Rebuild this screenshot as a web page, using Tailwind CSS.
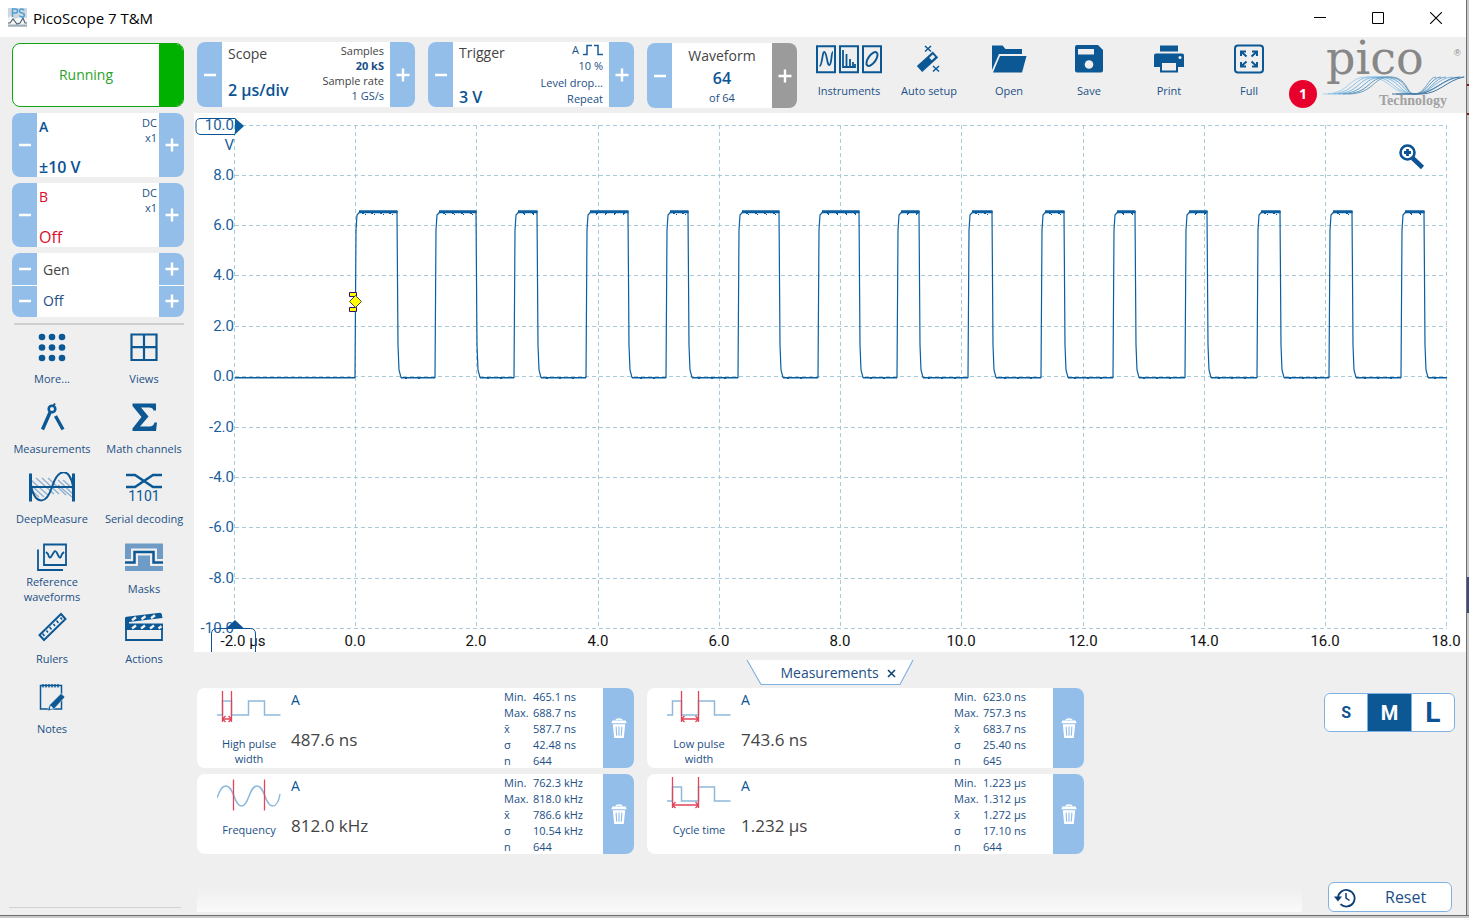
<!DOCTYPE html>
<html lang="en">
<head>
<meta charset="utf-8">
<title>PicoScope 7 T&amp;M</title>
<script src="https://cdn.jsdelivr.net/npm/@tailwindcss/browser@4"></script>
</head>
<body class="flex min-h-screen flex-col bg-[#efefef] font-['Open_Sans','Noto_Sans',sans-serif] text-[#1b4f86]">
<svg class="hidden">
  <symbol id="minus" viewBox="0 0 14 14"><path d="M1 7h12" stroke="#fff" stroke-width="2.4"/></symbol>
  <symbol id="plus" viewBox="0 0 14 14"><path d="M.5 7h13M7 .5v13" stroke="#fff" stroke-width="2.4"/></symbol>
  <symbol id="trash" viewBox="0 0 16 22"><path d="M5 2.500Q5 1 8 1t3 1.500" fill="none" stroke="#fff" stroke-width="1.500"/><path d="M1 2.500h14l1 3H0z" fill="#fff"/><path d="M1.500 6.500h13L13 21H3z" fill="#fff"/><path d="M5 9l.6 9.500M8 9v9.500M11 9l-.6 9.500" stroke="#93bee9" stroke-width="1.200"/></symbol>
</svg>

<div class="flex flex-1">
<div class="flex min-w-0 flex-1 flex-col">
<header class="flex h-[37px] items-center bg-white pb-[2px] pl-2 text-black">
  <svg class="h-[19px] w-[19px]" viewBox="0 0 19 19"><path d="M0 0h19v19H0z" fill="#cfd8df"/><path d="M0 10l3-2 4 3 5-2 7 1v7H0z" fill="#f4f7f9"/><path d="M0 17.500h19" stroke="#9fb0bd" stroke-width="2"/><path d="M0 15h2l3-4 4 5 3-1 3-5 2 5h2" fill="none" stroke="#51606d" stroke-width="1.100"/><path d="M4.500 9V1h3q2 0 2 2t-2 2h-3M16 2.500Q15.500 1 14 1q-2.500 0-2.500 1.800T14 5t2.300 2.200Q16.300 9 14 9q-2 0-2.600-1.600" fill="none" stroke="#4f9ed4" stroke-width="1.500"/></svg>
  <h1 class="ml-[6px] text-[15px] leading-5 font-normal">PicoScope 7 T&amp;M</h1>
  <div class="ml-auto flex pr-px">
    <button aria-label="Minimize" class="flex h-9 w-[58px] items-center justify-center"><svg class="h-3 w-3" viewBox="0 0 12 12"><path d="M0 5.500h12" stroke="#000"/></svg></button>
    <button aria-label="Maximize" class="flex h-9 w-[58px] items-center justify-center"><svg class="h-3 w-3" viewBox="0 0 12 12"><path d="M.5.5h11v11H.5z" fill="none" stroke="#000"/></svg></button>
    <button aria-label="Close" class="flex h-9 w-[58px] items-center justify-center"><svg class="h-3 w-3" viewBox="0 0 12 12"><path d="M0 0l12 12M12 0L0 12" stroke="#000" stroke-width="1.100"/></svg></button>
  </div>
</header>

<div class="flex flex-1">
<aside class="flex w-[194px] shrink-0 flex-col pt-[6px]">
  <div class="ml-3 flex w-[172px] flex-col gap-[6px]">
    <button class="flex h-16 overflow-hidden rounded-lg border border-[#12a512] bg-white text-sm text-[#2aa32a]">
      <span class="flex h-full flex-1 items-center justify-center">Running</span><span class="h-full w-6 bg-[#00b100]"></span>
    </button>
    <section class="flex h-16 overflow-hidden rounded-lg bg-white">
      <button aria-label="A range down" class="flex w-[25px] items-center justify-center bg-[#93bee9]"><svg class="h-[14px] w-[14px]"><use href="#minus"/></svg></button>
      <div class="flex flex-1 flex-col justify-between px-[2px] pt-[2px]">
        <div class="flex justify-between"><span class="pt-[2px] text-sm leading-5 font-semibold text-[#0b5394]">A</span><span class="text-right text-[11px] leading-[15px]">DC<br>x1</span></div>
        <div class="text-base leading-5 font-semibold text-[#0b5394]">±10 V</div>
      </div>
      <button aria-label="A range up" class="flex w-[25px] items-center justify-center bg-[#93bee9]"><svg class="h-[14px] w-[14px]"><use href="#plus"/></svg></button>
    </section>
    <section class="flex h-16 overflow-hidden rounded-lg bg-white">
      <button aria-label="B range down" class="flex w-[25px] items-center justify-center bg-[#93bee9]"><svg class="h-[14px] w-[14px]"><use href="#minus"/></svg></button>
      <div class="flex flex-1 flex-col justify-between px-[2px] pt-[2px]">
        <div class="flex justify-between"><span class="pt-[2px] text-sm leading-5 font-medium text-[#dc0a2d]">B</span><span class="text-right text-[11px] leading-[15px]">DC<br>x1</span></div>
        <div class="text-base leading-5 font-medium text-[#dc0a2d]">Off</div>
      </div>
      <button aria-label="B range up" class="flex w-[25px] items-center justify-center bg-[#93bee9]"><svg class="h-[14px] w-[14px]"><use href="#plus"/></svg></button>
    </section>
    <section class="flex h-16 overflow-hidden rounded-lg bg-white text-sm">
      <div class="flex w-[25px] flex-col gap-px">
        <button aria-label="Generator previous" class="flex flex-1 items-center justify-center bg-[#93bee9]"><svg class="h-[14px] w-[14px]"><use href="#minus"/></svg></button>
        <button aria-label="Generator down" class="flex flex-1 items-center justify-center bg-[#93bee9]"><svg class="h-[14px] w-[14px]"><use href="#minus"/></svg></button>
      </div>
      <div class="flex flex-1 flex-col justify-around pt-px pl-[6px]"><span class="text-[#444]">Gen</span><span>Off</span></div>
      <div class="flex w-[25px] flex-col gap-px">
        <button aria-label="Generator next" class="flex flex-1 items-center justify-center bg-[#93bee9]"><svg class="h-[14px] w-[14px]"><use href="#plus"/></svg></button>
        <button aria-label="Generator up" class="flex flex-1 items-center justify-center bg-[#93bee9]"><svg class="h-[14px] w-[14px]"><use href="#plus"/></svg></button>
      </div>
    </section>
    <div class="ml-[2px] h-[2px] bg-[#cfcfcf]"></div>
  </div>

  <nav class="mt-[7px] ml-[6px] grid w-[184px] auto-rows-[70px] grid-cols-2 text-center text-[11px] leading-[15px]">
    <button class="flex flex-col items-center"><svg class="h-8 w-12" viewBox="0 0 48 32" fill="#0b5895"><circle cx="14" cy="5" r="3.300"/><circle cx="24" cy="5" r="3.300"/><circle cx="34" cy="5" r="3.300"/><circle cx="14" cy="15.500" r="3.300"/><circle cx="24" cy="15.500" r="3.300"/><circle cx="34" cy="15.500" r="3.300"/><circle cx="14" cy="26" r="3.300"/><circle cx="24" cy="26" r="3.300"/><circle cx="34" cy="26" r="3.300"/></svg><span class="mt-[7px]">More...</span></button>
    <button class="flex flex-col items-center"><svg class="h-8 w-12" viewBox="0 0 48 32" fill="none" stroke="#0b5895" stroke-width="2.200"><path d="M11.500 2.500h25v25.500h-25zM24 2.500V28M11.500 15.200h25"/></svg><span class="mt-[7px]">Views</span></button>
    <button class="flex flex-col items-center"><svg class="h-8 w-12" viewBox="0 0 48 32" fill="none" stroke="#0b5895"><circle cx="24" cy="7" r="3.300" stroke-width="2.600"/><path d="M25.500 3.500L27 1.500" stroke-width="2"/><path d="M22 10.500L14.500 27.500M27.500 14L35 27.500" stroke-width="3.400"/></svg><span class="mt-[7px]">Measurements</span></button>
    <button class="flex flex-col items-center"><svg class="h-8 w-12" viewBox="0 0 48 32"><path d="M12.500 1.500H36v7h-2.500Q33 5.500 29 5.500H21l7.500 9L20 24.500h9.500q4 0 5-4H37L36 29H12.500v-2.500l9-11.500-9-11z" fill="#0b5895"/></svg><span class="mt-[7px]">Math channels</span></button>
    <button class="flex flex-col items-center"><svg class="h-8 w-12" viewBox="0 0 48 32" fill="none"><path d="M3 8l18 16M3 13l13 12M8 6l18 16M14 6l17 16M20 6l18 17M30 8l15 14M35 8l10 9M30 13l14 12M3 18l8 7" stroke="#8fb0cf" stroke-width="1.400"/><path d="M2.500 1.500v28M45.500 1.500v28" stroke="#0b5895" stroke-width="3"/><path d="M3 15h42" stroke="#0b5895" stroke-width="1.800"/><path d="M3 14C7 32 18 34 24 15S41-5 45 14" stroke="#0b5895" stroke-width="2"/></svg><span class="mt-[7px]">DeepMeasure</span></button>
    <button class="flex flex-col items-center"><svg class="h-8 w-12 overflow-visible" viewBox="0 0 48 32"><path d="M6 3h9l18 12h9M6 15h9L33 3h9" fill="none" stroke="#0b5895" stroke-width="2.500"/><text x="24" y="29" text-anchor="middle" font-family="Roboto" font-size="14" fill="#0b5895">1101</text></svg><span class="mt-[7px]">Serial decoding</span></button>
    <button class="flex flex-col items-center"><svg class="h-8 w-12" viewBox="0 0 48 32" fill="none" stroke="#0b5895"><path d="M16 2.500h22v20.500H16z" stroke-width="1.800"/><path d="M10 7.500V28h25" stroke-width="1.800"/><path d="M18 10l2 2q1.500 6 3.500 2l2.500-4q1.500-2 3 1l2 4q1.500 2 3-3l2-2" stroke-width="1.800"/></svg><span>Reference<br>waveforms</span></button>
    <button class="flex flex-col items-center"><svg class="h-8 w-12" viewBox="0 0 48 32" fill="none"><path d="M5 1.500h38V29H5z" fill="#6e9cc6"/><path d="M5 20.500h9.500V10h19v10.500H43" stroke="#efefef" stroke-width="7"/><path d="M5 20.500h9.500V10h19v10.500H43" stroke="#0b5895" stroke-width="2.500"/></svg><span class="mt-[7px]">Masks</span></button>
    <button class="flex flex-col items-center"><svg class="h-8 w-12" viewBox="0 0 48 32" fill="none" stroke="#0b5895"><path d="M33 2l4.500 5L16 28l-4.500-5z" stroke-width="2"/><path d="M16.500 24l-2-2.500M20 20.500l-1.500-2M23.500 17.500l-2-2.500M27 14l-1.500-2M30.500 11l-2-2.500M34 7.500l-1.500-2" stroke-width="1.500"/></svg><span class="mt-[7px]">Rulers</span></button>
    <button class="flex flex-col items-center"><svg class="h-8 w-12" viewBox="0 0 48 32" fill="none"><path d="M6 12.500h36V28H6z" fill="#efefef" stroke="#0b5895" stroke-width="1.800"/><path d="M5 12h38v6H5zM5 11V6Q5 5 6.500 4.800L40 .8q1.500 0 1.800 1.500L42.500 6 9 10v2H5z" fill="#0b5895"/><path d="M12 8.300l4-3M21.500 7.300l4-3M31 6.300l4-3M12 16.500l4-3M21 16.500l4-3M30 16.500l4-3M38.500 16.500l3-2.300" stroke="#efefef" stroke-width="2.400"/></svg><span class="mt-[7px]">Actions</span></button>
    <button class="flex flex-col items-center"><svg class="h-8 w-12" viewBox="0 0 48 32" fill="none"><path d="M12.500 3.500h21V27h-21z" stroke="#0b5895" stroke-width="1.500"/><path d="M15 2v3.500M18 2v3.500M21 2v3.500M24 2v3.500M27 2v3.500M30 2v3.500" stroke="#0b5895" stroke-width="1.400"/><path d="M33 11.500l4 3.500-11 12-6.500 2 2-6z" fill="#0b5895" stroke="#efefef" stroke-width=".6"/><path d="M22.500 23.500l3 2.800-3.500.9z" fill="#fff"/></svg><span class="mt-[7px]">Notes</span></button>
  </nav>
  <div class="mt-auto mb-[7px] ml-[9px] h-px w-[172px] bg-[#d2d2d2]"></div>
</aside>

<main class="flex min-w-0 flex-1 flex-col">
  <div class="flex h-[76px] shrink-0 items-start pt-[5px] pl-[3px]">
    <section class="flex h-[65px] w-[218px] overflow-hidden rounded-lg bg-white">
      <button aria-label="Timebase down" class="flex w-[25px] items-center justify-center bg-[#93bee9]"><svg class="h-[14px] w-[14px]"><use href="#minus"/></svg></button>
      <div class="flex flex-1 justify-between px-[6px] pt-px">
        <div class="flex flex-col justify-between"><span class="pt-px text-sm text-[#444]">Scope</span><span class="pb-[7px] text-base leading-5 font-semibold text-[#0b5394]">2 µs/div</span></div>
        <div class="text-right text-[11px] leading-[15px]"><div class="text-[#444]">Samples</div><div class="font-bold">20 kS</div><div class="text-[#444]">Sample rate</div><div>1 GS/s</div></div>
      </div>
      <button aria-label="Timebase up" class="flex w-[25px] items-center justify-center bg-[#93bee9]"><svg class="h-[14px] w-[14px]"><use href="#plus"/></svg></button>
    </section>
    <section class="ml-[13px] flex h-[65px] w-[206px] overflow-hidden rounded-lg bg-white">
      <button aria-label="Trigger level down" class="flex w-[25px] items-center justify-center bg-[#93bee9]"><svg class="h-[14px] w-[14px]"><use href="#minus"/></svg></button>
      <div class="flex flex-1 justify-between px-[6px]">
        <div class="flex flex-col justify-between"><span class="pt-px text-sm text-[#444]">Trigger</span><span class="text-base leading-5 font-semibold text-[#0b5394]">3 V</span></div>
        <div class="flex flex-col items-end text-[11px] leading-4"><div class="flex items-center gap-1">A<svg class="h-3 w-5" viewBox="0 0 20 12" fill="none" stroke="#1b5c98" stroke-width="1.500"><path d="M0 10.500h4V1.500h5M11 1.500h4v9h5"/></svg></div><div>10 %</div><div class="pt-px">Level drop...</div><div>Repeat</div></div>
      </div>
      <button aria-label="Trigger level up" class="flex w-[25px] items-center justify-center bg-[#93bee9]"><svg class="h-[14px] w-[14px]"><use href="#plus"/></svg></button>
    </section>
    <section class="mt-px ml-[13px] flex h-[65px] w-[150px] overflow-hidden rounded-lg bg-white">
      <button aria-label="Previous waveform" class="flex w-[25px] items-center justify-center bg-[#93bee9]"><svg class="h-[14px] w-[14px]"><use href="#minus"/></svg></button>
      <div class="flex flex-1 flex-col items-center pt-[3px]"><span class="text-sm text-[#444]">Waveform</span><span class="text-base leading-6 font-semibold text-[#0b5394]">64</span><span class="text-[11px] leading-4">of 64</span></div>
      <button aria-label="Next waveform" class="flex w-[25px] items-center justify-center bg-[#9b9b9b]"><svg class="h-[14px] w-[14px]"><use href="#plus"/></svg></button>
    </section>
    <nav class="ml-3 flex text-[11px] leading-4">
      <button class="flex w-20 flex-col items-center gap-[7px]"><svg class="h-[34px] w-[66px]" viewBox="0 0 66 34" fill="none" stroke="#0b5895"><path d="M1 4.200h18v26H1zM24 4.200h18v26H24zM47 4.200h18v26H47z" stroke-width="2"/><path d="M3.500 24C6.500 24 6 9 8.500 10S11 24 13.500 23 15 10 17 10" stroke-width="1.800"/><path d="M27 8v17h12V22M30.500 25V12M34 25v-8M37 25v-5" stroke-width="1.800"/><ellipse cx="56" cy="17" rx="3.800" ry="8" transform="rotate(35 56 17)" stroke-width="2"/></svg>Instruments</button>
      <button class="flex w-20 flex-col items-center gap-[7px]"><svg class="h-[34px] w-10" viewBox="0 0 40 34" fill="none"><path d="M10.500 27L26.500 12.500" stroke="#0b5895" stroke-width="8"/><path d="M21.500 17l3.500-3.200" stroke="#efefef" stroke-width="3.500"/><path d="M16 4l6 5.500M22 4l-6 5.500M24 24l6 5.500M30 24l-6 5.500" stroke="#0b5895" stroke-width="1.500"/></svg>Auto setup</button>
      <button class="flex w-20 flex-col items-center gap-[7px]"><svg class="h-[34px] w-9" viewBox="0 0 36 34" fill="#0b5895"><path d="M1 28V3.500h10.500L14.500 7H31v5H8z"/><path d="M9 14h26.500l-4.500 16.500H2z"/></svg>Open</button>
      <button class="flex w-20 flex-col items-center gap-[7px]"><svg class="h-[34px] w-9" viewBox="0 0 36 34"><path d="M4 5q0-2 2-2h21l5 5v20.500q0 2-2 2H6q-2 0-2-2z" fill="#0b5895"/><path d="M7 7h16v5.500H7z" fill="#efefef"/><circle cx="18" cy="22.500" r="4.300" fill="#efefef"/></svg>Save</button>
      <button class="flex w-20 flex-col items-center gap-[7px]"><svg class="h-[34px] w-9" viewBox="0 0 36 34"><path d="M9 3.500h18v6H9zM5 11.500h26q2 0 2 2v11.500h-7v-5H10v5H3V13.500q0-2 2-2z" fill="#0b5895"/><path d="M10 20h16v9.500H10z" fill="#efefef" stroke="#0b5895" stroke-width="2"/><circle cx="29" cy="15.500" r="1.500" fill="#efefef"/></svg>Print</button>
      <button class="flex w-20 flex-col items-center gap-[7px]"><svg class="h-[34px] w-9" viewBox="0 0 36 34" fill="none" stroke="#0b5895"><rect x="4" y="3.500" width="28" height="27" rx="3" stroke-width="2"/><path d="M10 14V9.500h5M21 9.500h5V14M10 20v4.500h5M21 24.500h5V20M10.500 10l5 4.500M25.500 10l-5 4.500M10.500 24l5-4.500M25.500 24l-5-4.500" stroke-width="2"/></svg>Full</button>
    </nav>
    <div class="mt-[38px] flex h-7 w-7 shrink-0 items-center justify-center rounded-full bg-[#e8002d] text-sm font-bold text-white">1</div>
    <svg class="ml-auto h-[68px] w-[146px] shrink-0 overflow-visible" viewBox="0 0 146 68" role="img" aria-label="pico Technology">
      <g fill="none" stroke-width="1">
        <path d="M3 52c28 0 24-17 44-17 24 0 24 17 44 17 26 0 30-17 54-17" stroke="#a6cfec"/>
        <path d="M8 52c28 0 24-17 44-17 24 0 20 17 44 17 20 0 26-17 48-17" stroke="#8ec3e8"/>
        <path d="M13 52c28 0 24-17 44-17 24 0 20 17 38 17 16 0 22-17 38-17" stroke="#7fb9e2"/>
        <path d="M18 52c28 0 24-17 44-17 22 0 20 17 34 17 14 0 18-17 30-17" stroke="#6aa9d6"/>
        <path d="M23 52c28 0 24-17 44-17 20 0 18 17 28 17 12 0 16-17 26-17" stroke="#5b96c1"/>
        <path d="M28 52c26 0 24-17 42-17 18 0 16 17 24 17 12 0 14-17 22-17" stroke="#6f9fc2"/>
        <path d="M72 52h24c18 0 28-17 44-17M76 52h25c18 0 26-14 43-17" stroke="#46779f"/>
      </g>
      <text x="6" y="32" font-family="DejaVu Serif" font-size="46" fill="#878787">pico</text>
      <text x="134" y="14" font-family="Liberation Sans" font-size="9" fill="#878787">®</text>
      <text x="59" y="63" font-family="Liberation Serif" font-size="14" font-weight="bold" fill="#a2a2a2">Technology</text>
    </svg>
  </div>

  <section class="relative bg-white" aria-label="Scope view">
    <svg id="scope" class="block h-auto w-full" viewBox="194 113 1272 539" fill="none">
      <g id="grid" stroke="#a9cbd9" stroke-dasharray="4 3"></g>
      <g id="volts" font-family="Roboto" font-size="15" fill="#1a5f9c" text-anchor="end"></g>
      <g id="times" font-family="Roboto" font-size="15" fill="#111" text-anchor="middle"></g>
      <path id="trace" stroke="#0b5fa0" stroke-width="1.200"/>
      <path id="flats" stroke="#0b5fa0" stroke-width="3"/>
      <path id="noise" stroke="#0b5fa0"/>
      <path d="M235 118.500h-34q-5 0-5 4v7q0 5 5 5h34" stroke="#0b5394"/>
      <path d="M235 118l9 8-9 8.500z" fill="#0b5fa0"/>
      <path d="M211.500 652v-18q0-5.500 5-5.500h34q5 0 5 5.500v18" stroke="#0b5394"/>
      <path d="M226 628.500l9-8.500 9 8.500z" fill="#0b5394"/>
      <path d="M349.500 292.500h7v4h-7zM349.500 307.500h7v4h-7z" fill="#ff0" stroke="#30106b"/>
      <path d="M355.500 295.500l6 6-6 6-6-6z" fill="#ff0" stroke="#444"/>
    </svg>
    <button aria-label="Zoom" class="absolute top-[30px] right-[41px]"><svg class="h-[27px] w-[27px]" viewBox="0 0 27 27" fill="none" stroke="#0b5394"><circle cx="9.500" cy="9.500" r="7" stroke-width="2.600"/><path d="M9.500 6v7M6 9.500h7" stroke-width="2.800"/><path d="M14.500 15l10 9.500" stroke-width="4.500"/></svg></button>
  </section>

  <section class="flex flex-1 flex-col">
    <div class="flex h-9 items-center justify-center pt-[6px]">
      <div class="relative flex h-[26px] w-[168px] items-center justify-center gap-2">
        <svg class="absolute inset-0 h-full w-full" viewBox="0 0 168 26"><path d="M1 0l14 24.500h139L167 0" fill="#fff" stroke="#7fb2e2" stroke-width="1.200"/></svg>
        <span class="relative ml-4 text-sm">Measurements</span>
        <button aria-label="Close measurements" class="relative"><svg class="h-[9px] w-[9px]" viewBox="0 0 9 9"><path d="M1 1l7 7M8 1L1 8" stroke="#0b3f74" stroke-width="1.500"/></svg></button>
      </div>
    </div>
    <div class="flex items-start justify-between pr-[11px] pl-[3px]">
      <div id="cards" class="grid grid-cols-[437px_437px] gap-x-[13px] gap-y-[6px]"></div>
      <fieldset class="mt-[5px] flex h-[39px] w-[131px] overflow-hidden rounded-md border border-[#7fb2e2] bg-white font-[Roboto] font-bold text-[#0b5394]">
        <label class="flex flex-1 items-center justify-center pt-px text-base"><input class="sr-only" type="radio" name="size">S</label>
        <label class="flex flex-1 items-center justify-center border-x border-[#7fb2e2] bg-[#0b5895] text-xl text-white"><input class="sr-only" type="radio" name="size" checked>M</label>
        <label class="flex flex-1 items-center justify-center pt-px text-[28px]"><input class="sr-only" type="radio" name="size">L</label>
      </fieldset>
    </div>
    <div class="mt-auto flex items-end pr-[14px] pb-[3px] pl-[3px]">
      <div class="h-6 flex-1 bg-linear-to-b from-[#efefef] to-[#fafafa]"></div>
      <button class="ml-[26px] flex h-[30px] w-[124px] items-center rounded-md border border-[#7fb2e2] bg-white pl-[5px] text-base">
        <svg class="h-[21px] w-[22px]" viewBox="0 0 22 21" fill="none" stroke="#0b3f74" stroke-width="1.800"><path d="M4 11a8.300 8.300 0 1 1 2.500 6.200"/><path d="M0 9.500h8l-4 5z" fill="#0b3f74" stroke="none"/><path d="M12 6v5l3.500 2.500" stroke-width="1.500"/></svg>
        <span class="ml-[29px]">Reset</span>
      </button>
    </div>
  </section>
</main>
</div>
</div>
<div class="relative w-[3px] shrink-0 border-l border-[#6d6d6d] bg-[#c9c9c9]">
  <div class="absolute top-[84px] h-[2px] w-[2px] bg-[#8a1515]"></div>
  <div class="absolute top-[113px] h-[2px] w-[2px] bg-[#8a1515]"></div>
  <div class="absolute top-[577px] h-[36px] w-[2px] bg-[#3c4a80]"></div>
</div>
</div>
<div class="h-[3px] border-t border-[#6d6d6d] bg-[#c9c9c9]"></div>

<script>
const ySteps = [125, 175, 225, 275, 326, 376, 427, 477, 527, 578, 628];
let grid = '', volts = '', times = '';
ySteps.forEach((y, i) => {
  const v = 10 - 2 * i;
  grid += `<path d="M235 ${y + 0.5}H1447"/>`;
  volts += `<text x="234" y="${y + 5}">${v.toFixed(1)}</text>`;
});
volts += '<text x="234" y="150">V</text>';
for (let i = 0; i <= 10; i++) {
  const x = Math.floor(234.3 + 121.25 * i);
  grid += `<path d="M${x + 0.5} 125V628"/>`;
  times += `<text x="${i ? x : 243}" y="646">${i ? (2 * i - 2).toFixed(1) : '-2.0 µs'}</text>`;
}
document.getElementById('grid').innerHTML = grid;
document.getElementById('volts').innerHTML = volts;
document.getElementById('times').innerHTML = times;

// Rising and falling edge of each pulse
const pulses = [[355,397],[435,476],[514,537],[586,628],[666,688],[738,779],[818,859],[897,919],[968,992],[1041,1064],[1113,1135],[1185,1207],[1257,1280],[1329,1352],[1401,1424]];
let trace = 'M235 377.5', flats = '', base = 'M235 378H355', noise = '';
pulses.forEach(([r, f], i) => {
  const next = i + 1 < pulses.length ? pulses[i + 1][0] : 1447;
  trace += `H${r}L${r + 1} 230L${r + 2} 215L${r + 5} 211.5H${f}L${f + 1} 345L${f + 2} 370L${f + 4} 377.5`;
  flats += `M${r + 4} 211.8H${f + 0.5}`;
  base += `M${f + 4} 378H${next}`;
  for (let x = r + 7; x < f - 3; x += 9) noise += `M${x + (i * 5) % 4} 213.5h2M${x + 3} 214.5h1`;
  for (let x = f + 8; x < next - 6; x += 13) noise += `M${x + (i * 3) % 5} 378.5h2`;
});
document.getElementById('trace').setAttribute('d', trace + 'H1447');
document.getElementById('flats').setAttribute('d', flats);
document.getElementById('noise').setAttribute('d', noise + base);

const step = (d, marks) => `<path d="${d}" stroke="#8fb9dc" stroke-width="1.500"/><path d="${marks}" stroke="#e2445a" stroke-width="1.300"/>`;
const cards = [
  ['High pulse width', '487.6 ns', ['465.1 ns', '688.7 ns', '587.7 ns', '42.48 ns', '644'], step('M0 25h5.500V11h9v14h17V11h16v14h16', 'M5.500 1v31M14.500 1v31M5.500 29h9M8.500 26l-3 3 3 3M11.500 26l3 3-3 3')],
  ['Low pulse width', '743.6 ns', ['623.0 ns', '757.3 ns', '683.7 ns', '25.40 ns', '645'], step('M0 25h5.500V11h9v14h17V11h16v14h16', 'M14.500 1v31M31.500 1v31M14.500 29h17M17.500 26l-3 3 3 3M28.500 26l3 3-3 3')],
  ['Frequency', '812.0 kHz', ['762.3 kHz', '818.0 kHz', '786.6 kHz', '10.54 kHz', '644'], step('M0 22C3 14 5 10 9 10c8 0 8 20 15.500 20S32 10 40 10s8 20 15.500 20C60 30 62 24 63 18', 'M16.500 3.500v31M47.500 3.500v31')],
  ['Cycle time', '1.232 µs', ['1.223 µs', '1.312 µs', '1.272 µs', '17.10 ns', '644'], step('M0 25h5.500V11h9v14h17V11h16v14h16', 'M5.500 1v31M31.500 1v31M5.500 29h26M8.500 26l-3 3 3 3M28.500 26l3 3-3 3')]
];
const names = ['Min.', 'Max.', 'x̄', 'σ', 'n'];
document.getElementById('cards').innerHTML = cards.map(([name, value, stats, icon]) => `
  <article class="flex h-20 overflow-hidden rounded-lg bg-white">
    <div class="flex w-[84px] flex-col items-center pt-[2px] pl-5">
      <svg class="h-9 w-16 shrink-0" viewBox="0 0 64 36" fill="none">${icon}</svg>
      <div class="flex flex-1 items-start pt-[10px] text-center text-[11px] leading-[15px]">${name}</div>
    </div>
    <div class="flex flex-1 flex-col gap-[18px] pt-[2px] pl-[10px]"><span class="text-sm leading-5 text-[#0b5394]">A</span><span class="text-[17px] leading-6 text-[#444]">${value}</span></div>
    <table class="mt-px w-[99px] self-start text-left text-[11px] leading-4"><tbody>
      ${stats.map((s, i) => `<tr><th class="w-[29px] p-0 font-normal">${names[i]}</th><td class="p-0">${s}</td></tr>`).join('')}
    </tbody></table>
    <button aria-label="Delete ${name}" class="flex w-[31px] items-center justify-center bg-[#93bee9]"><svg class="h-[21px] w-4"><use href="#trash"/></svg></button>
  </article>`).join('');
</script>
</body>
</html>
